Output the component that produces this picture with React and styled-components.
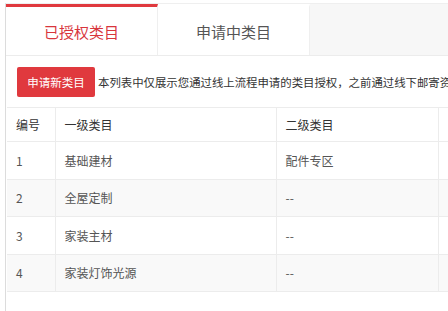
import React from 'react';
import styled, { createGlobalStyle } from 'styled-components';

const GlobalStyle = createGlobalStyle`
    html, body {
        margin: 0;
        padding: 0;
        background: #fff;
        overflow: hidden;
    }
    body {
        font-family: "Microsoft YaHei", "Noto Sans CJK SC", "Noto Sans", sans-serif;
    }
`;

const Panel = styled.div`
    margin: 3px 0 0 5px;
    border-left: 1px solid #dcdcdc;
    border-top: 1px solid #efefef;
    height: 308px;
    width: 600px;
`;

const TabBar = styled.div`
    display: flex;
    height: 51px;
    background: #f7f7f7;
    border-bottom: 1px solid #ececec;
`;

const Tab = styled.div`
    width: 152px;
    box-sizing: border-box;
    display: flex;
    align-items: center;
    justify-content: center;
    background: #fff;
    border-top: 3px solid ${p => (p.active ? '#e0393e' : 'transparent')};
    border-right: 1px solid #efefef;
    color: ${p => (p.active ? '#d8353c' : '#555')};
    font-size: 15px;
    padding-top: 1px;
`;

const Toolbar = styled.div`
    display: flex;
    align-items: center;
    gap: 3px;
    padding: 11px 0 10px 11px;
`;

const Button = styled.button`
    flex: 0 0 auto;
    width: 78px;
    height: 30px;
    border: none;
    border-radius: 2px;
    background: #e0393e;
    color: #fff;
    font-family: inherit;
    font-size: 11.5px;
    padding: 0;
    white-space: nowrap;
`;

const Notice = styled.span`
    font-size: 11.4px;
    color: #333;
    white-space: nowrap;
`;

const Table = styled.table`
    border-collapse: collapse;
    table-layout: fixed;
    width: 600px;
    margin-left: 1px;
    border-top: 1px solid #ececec;
    font-size: 12px;
`;

const Row = styled.tr`
    height: 37.5px;
    background: ${p => (p.striped ? '#f9f9f9' : '#fff')};
`;

const HeadRow = styled.tr`
    height: 34px;
    background: #fff;
`;

const Cell = styled.td`
    padding: 0 0 0 9px;
    border: 1px solid #ececec;
    border-top: none;
    border-left: none;
    color: ${p => (p.head ? '#333' : '#555')};
    vertical-align: middle;
    white-space: nowrap;
`;

const rows = [
    { id: 1, first: '基础建材', second: '配件专区' },
    { id: 2, first: '全屋定制', second: '--' },
    { id: 3, first: '家装主材', second: '--' },
    { id: 4, first: '家装灯饰光源', second: '--' },
];

const App = () => (
    <>
        <GlobalStyle />
        <Panel>
            <TabBar>
                <Tab active>已授权类目</Tab>
                <Tab>申请中类目</Tab>
            </TabBar>
            <Toolbar>
                <Button>申请新类目</Button>
                <Notice>本列表中仅展示您通过线上流程申请的类目授权，之前通过线下邮寄资</Notice>
            </Toolbar>
            <Table>
                <colgroup>
                    <col style={{ width: 48 }} />
                    <col style={{ width: 221 }} />
                    <col style={{ width: 162 }} />
                    <col />
                </colgroup>
                <thead>
                    <HeadRow>
                        <Cell head>编号</Cell>
                        <Cell head>一级类目</Cell>
                        <Cell head>二级类目</Cell>
                        <Cell head></Cell>
                    </HeadRow>
                </thead>
                <tbody>
                    {rows.map((r, i) => (
                        <Row key={r.id} striped={i % 2 === 1}>
                            <Cell>{r.id}</Cell>
                            <Cell>{r.first}</Cell>
                            <Cell>{r.second}</Cell>
                            <Cell></Cell>
                        </Row>
                    ))}
                </tbody>
            </Table>
        </Panel>
    </>
);

export default App;
